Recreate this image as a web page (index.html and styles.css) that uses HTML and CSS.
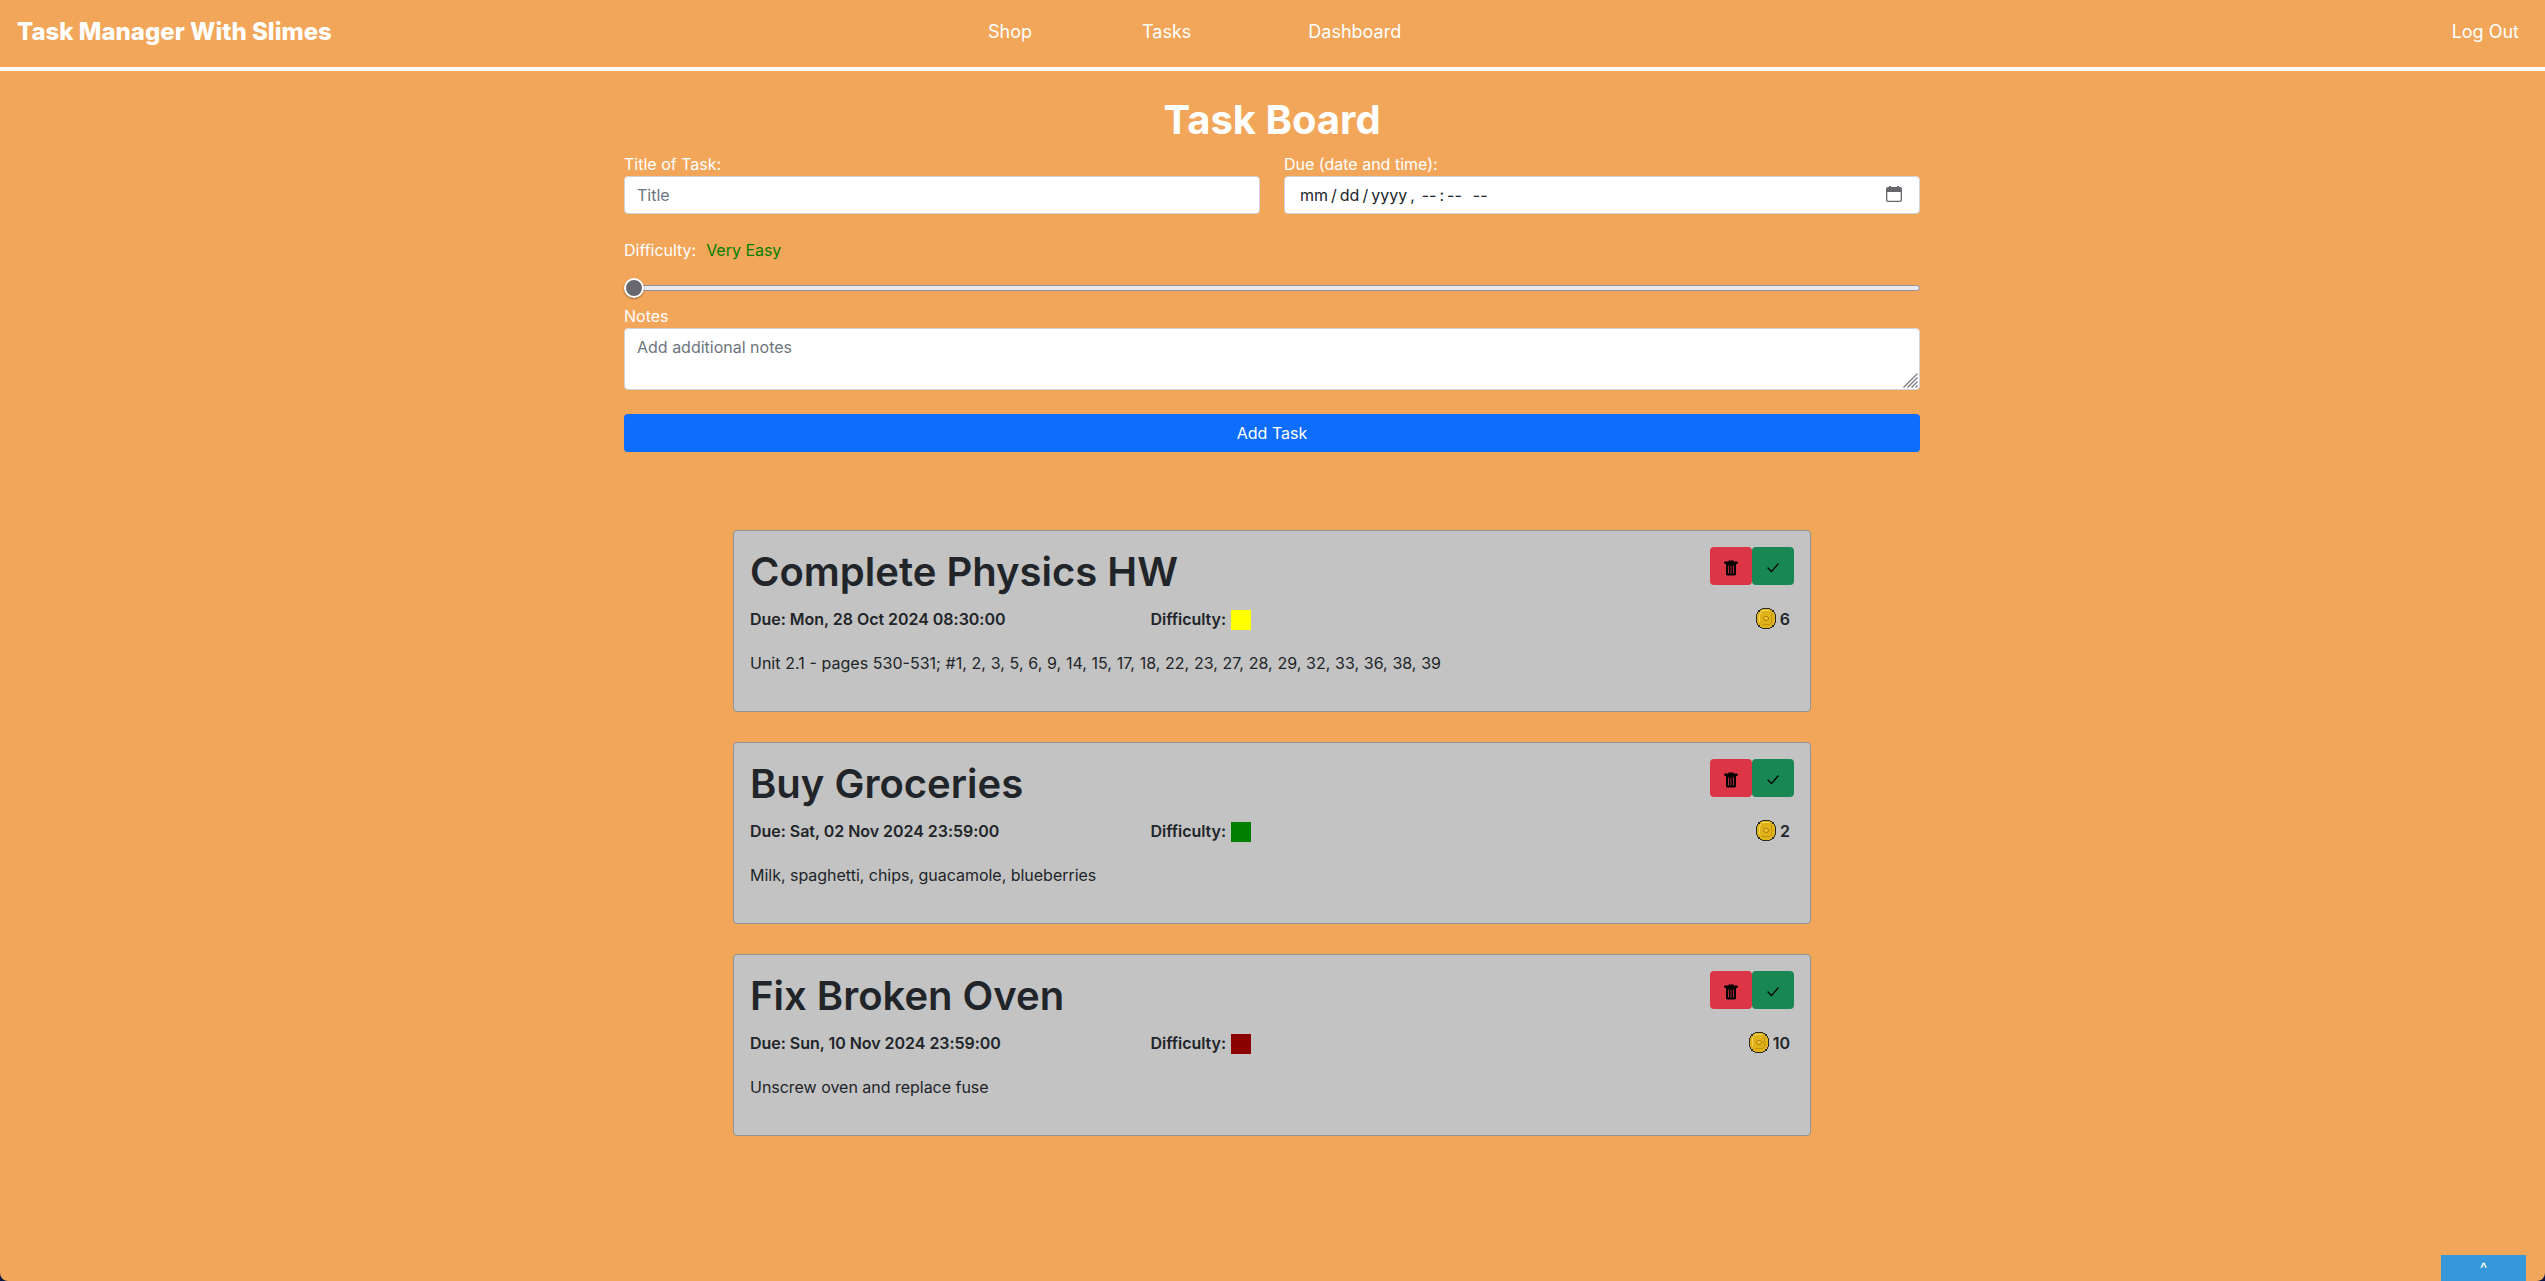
FILE: index.html
```html
<!DOCTYPE html>
<html lang="en">
<head>
<meta charset="utf-8">
<title>Task Manager With Slimes</title>
<link rel="stylesheet" href="styles.css">
</head>
<body>
<svg class="sprites" aria-hidden="true">
  <symbol id="trash" viewBox="0 0 14 16">
    <path d="M4.500 1.500V.5h5v1H13a.7.7 0 0 1 .7.7v1.800H.3V2.200a.7.7 0 0 1 .7-.7z"/>
    <path fill-rule="evenodd" d="M2 4h10v10a1.400 1.400 0 0 1-1.400 1.400H3.400A1.400 1.400 0 0 1 2 14zM4 5.500v8h.8v-8zM6.600 5.500v8h.8v-8zM9.200 5.500v8h.8v-8z"/>
  </symbol>
  <symbol id="check" viewBox="0 0 12 10">
    <path d="M1 5l3.500 3.600L11 1" fill="none" stroke="#000" stroke-width="1.300" stroke-linecap="round"/>
  </symbol>
  <symbol id="coin" viewBox="0 0 20 21">
    <path fill="#2c2a26" d="M6 0h8v1h2v1h2v2h1v2h1v9h-1v2h-1v2h-2v1h-2v1H6v-1H4v-1H2v-2H1v-2H0V6h1V4h1V2h2V1h2z"/>
    <path fill="#dfb219" d="M6 1h8v1h2v2h2v2h1v9h-1v2h-2v2h-2v1H6v-1H4v-2H2v-2H1V6h1V4h2V2h2z"/>
    <path fill="#f5d55a" d="M6 2h7v1H7v1H5v2H4v8H3V6h1V4h2z"/>
    <path fill="#c4930f" d="M15 5h1v10h-1v1h-1v1H6v-1h8v-1h1z"/>
    <path fill="none" stroke="#b5820c" d="M8.500 8.500h3l1 1v2l-1 1h-3l-1-1v-2z"/>
    <path fill="#edc34a" d="M9 9h2v2H9z"/>
  </symbol>
</svg>
<header class="navbar">
  <a class="brand">Task Manager With Slimes</a>
  <nav class="links"><a>Shop</a><a>Tasks</a><a>Dashboard</a></nav>
  <a class="logout">Log Out</a>
</header>
<main>
  <form class="task-form">
    <h1>Task Board</h1>
    <div class="row">
      <div class="field"><label>Title of Task:</label><input class="control" type="text" placeholder="Title"></div>
      <div class="field"><label>Due (date and time):</label>
        <div class="control date">
          <span class="parts"><span>mm</span><i>/</i><span>dd</span><i>/</i><span>yyyy</span><i>,</i><span class="time">--</span><i class="colon">:</i><span>--</span><span class="ampm">--</span></span>
          <svg class="calendar" viewBox="0 0 16 16"><path fill="#67676c" fill-rule="evenodd" d="M3 0h2v1h6V0h2v1h1a2 2 0 0 1 2 2v11a2 2 0 0 1-2 2H2a2 2 0 0 1-2-2V3a2 2 0 0 1 2-2h1zM1.300 6v8a.8.8 0 0 0 .8.8h11.800a.8.8 0 0 0 .8-.8V6z"/></svg>
        </div>
      </div>
    </div>
    <div class="difficulty"><label>Difficulty:</label><span class="level">Very Easy</span></div>
    <div class="slider"><span class="thumb"></span><span class="track"></span></div>
    <label>Notes</label>
    <div class="control notes"><span>Add additional notes</span>
      <svg class="grip" viewBox="0 0 15 15"><path stroke="#77777c" stroke-width="1.200" d="M.5 14.500l14-14M4.500 14.500l10-10M8.500 14.500l6-6M12.500 14.500l2-2"/></svg>
    </div>
    <button class="submit" type="button">Add Task</button>
  </form>
  <section class="tasks">
    <article class="card">
      <div class="top"><h2>Complete Physics HW</h2><div class="actions"><button class="del"><svg><use href="#trash"/></svg></button><button class="done"><svg><use href="#check"/></svg></button></div></div>
      <div class="meta"><span>Due: Mon, 28 Oct 2024 08:30:00</span><span class="diff">Difficulty: <b class="swatch yellow"></b></span><span class="reward"><svg><use href="#coin"/></svg>6</span></div>
      <p class="number-list">Unit 2.1 - pages 530-531; #1, 2, 3, 5, 6, 9, 14, 15, 17, 18, 22, 23, 27, 28, 29, 32, 33, 36, 38, 39</p>
    </article>
    <article class="card">
      <div class="top"><h2>Buy Groceries</h2><div class="actions"><button class="del"><svg><use href="#trash"/></svg></button><button class="done"><svg><use href="#check"/></svg></button></div></div>
      <div class="meta"><span>Due: Sat, 02 Nov 2024 23:59:00</span><span class="diff">Difficulty: <b class="swatch green"></b></span><span class="reward"><svg><use href="#coin"/></svg>2</span></div>
      <p>Milk, spaghetti, chips, guacamole, blueberries</p>
    </article>
    <article class="card">
      <div class="top"><h2>Fix Broken Oven</h2><div class="actions"><button class="del"><svg><use href="#trash"/></svg></button><button class="done"><svg><use href="#check"/></svg></button></div></div>
      <div class="meta"><span>Due: Sun, 10 Nov 2024 23:59:00</span><span class="diff">Difficulty: <b class="swatch red"></b></span><span class="reward"><svg><use href="#coin"/></svg>10</span></div>
      <p>Unscrew oven and replace fuse</p>
    </article>
  </section>
</main>
<button class="drawer">^</button>
</body>
</html>
```
FILE: styles.css
```css
* { box-sizing: border-box; }
html { background: #0b1541; height: 100%; overflow: hidden; }
body {
  margin: 0;
  height: 1281px;
  overflow: hidden;
  background: #f2a65a;
  border-radius: 0 0 8px 8px;
  font: 16px/24px Inter, "Liberation Sans", sans-serif;
  color: #fff;
}
h1, h2, p { margin: 0; }
button, input { font: inherit; border: 0; padding: 0; }
label { display: block; }
main { padding-right: 1px; }
.sprites { position: absolute; width: 0; height: 0; }

.navbar {
  display: grid;
  grid-template-columns: 988px 1fr auto;
  height: 71px;
  padding: 14px 26px 0 17px;
  border-bottom: 4px solid #fff;
  font-size: 18px;
  line-height: 36px;
}
.brand { font-size: 24px; font-weight: 800; line-height: 36px; }
.links { display: flex; gap: 110px; margin-left: -17px; }
.links a:last-child { margin-left: 7px; }

.task-form {
  display: flex;
  flex-direction: column;
  width: 1296px;
  margin: 0 auto;
  padding-top: 25px;
}
h1 { font-size: 40px; line-height: 48px; font-weight: 700; text-align: center; margin-bottom: 8px; }
.row { display: flex; gap: 24px; }
.field { flex: 1; }
.control {
  display: block;
  width: 100%;
  height: 38px;
  padding: 6px 12px;
  background: #fff;
  border: 1px solid #ced4da;
  border-radius: 4px;
  color: #212529;
}
.control::placeholder, .notes { color: #6c757d; opacity: 1; }
.date { display: flex; justify-content: space-between; padding: 6px 17px 6px 15px; }
.parts { display: flex; }
.parts i { font-style: normal; margin: 0 3px; }
.parts .time { margin-left: 4px; }
.parts .colon { margin: 0 3px; }
.parts .ampm { margin-left: 11px; }
.calendar { width: 16px; height: 16px; margin-top: 3px; }
.difficulty { display: flex; gap: 10px; margin-top: 24px; letter-spacing: -.02px; }
.level { color: green; }
.slider { display: flex; align-items: center; height: 20px; margin: 16px 0 6px; }
.thumb {
  width: 20px;
  height: 20px;
  border: 2px solid #fff;
  border-radius: 50%;
  background: #67676f;
  box-shadow: 0 1px 2px rgba(0, 0, 0, .4);
  z-index: 1;
}
.track { flex: 1; height: 6px; margin-left: -4px; background: #e9e9ed; border: 1px solid #8f8f9d; border-radius: 3px; }
.notes { display: flex; justify-content: space-between; height: 62px; padding: 6px 1px 1px 12px; }
.grip { width: 15px; height: 15px; align-self: flex-end; }
.submit { height: 38px; margin-top: 24px; border-radius: 4px; background: #0d6efd; color: #fff; }

.tasks { display: flex; flex-direction: column; gap: 30px; width: 1078px; margin: 78px auto 0; }
.card {
  height: 182px;
  padding: 16px;
  background: #c3c3c3;
  border: 1px solid #8f9499;
  border-radius: 4px;
  color: #212529;
}
.top { display: flex; justify-content: space-between; height: 60px; }
h2 { font-size: 40px; line-height: 48px; font-weight: 600; padding-top: 1px; }
.actions { display: flex; }
.actions button { display: flex; align-items: center; justify-content: center; width: 42px; height: 38px; border-radius: 4px; }
.del { background: #dc3545; }
.done { background: #198754; }
.del svg { width: 14px; height: 16px; margin-top: 3px; }
.done svg { width: 12px; height: 10px; margin-top: 3px; }
.meta { display: grid; grid-template-columns: 400.5px 1fr auto; height: 24px; font-weight: 600; letter-spacing: -.03px; }
.diff { display: flex; gap: 5px; }
.swatch { width: 20px; height: 20px; margin-top: 3px; }
.yellow { background: #ff0; }
.green { background: green; }
.red { background: #8b0000; }
.reward { display: flex; gap: 4px; padding-right: 4px; }
.reward svg { width: 20px; height: 21px; margin-top: 1px; }
.card p { margin-top: 20px; letter-spacing: -.02px; }
.card .number-list { letter-spacing: 0; word-spacing: .25px; }

.drawer {
  position: absolute;
  right: 19px;
  bottom: 0;
  width: 85px;
  height: 26px;
  background: #3498db;
  color: #fff;
  line-height: 24px;
}
```
